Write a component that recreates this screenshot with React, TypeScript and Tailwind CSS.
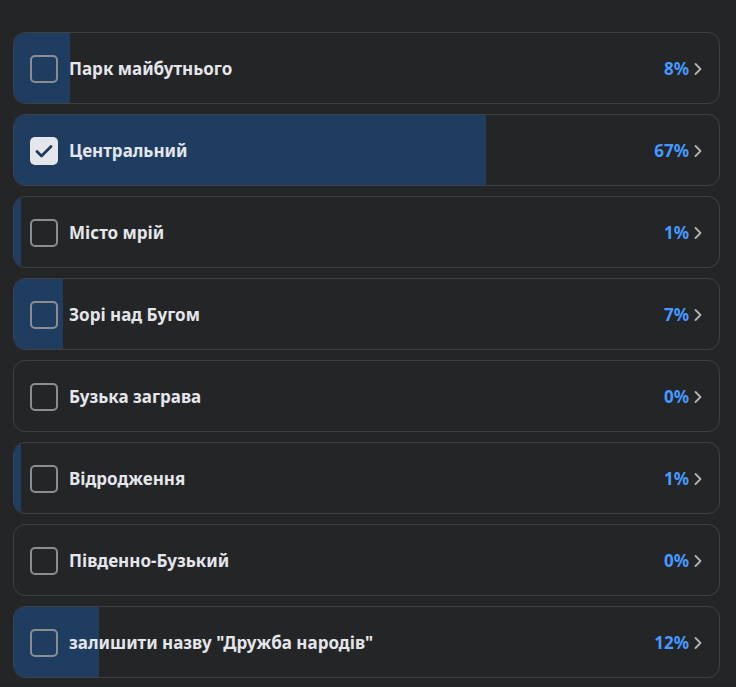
import React from "react";

const items = [
  { label: "Парк майбутнього", pct: 8, checked: false },
  { label: "Центральний", pct: 67, checked: true },
  { label: "Місто мрій", pct: 1, checked: false },
  { label: "Зорі над Бугом", pct: 7, checked: false },
  { label: "Бузька заграва", pct: 0, checked: false },
  { label: "Відродження", pct: 1, checked: false },
  { label: "Південно-Бузький", pct: 0, checked: false },
  { label: 'залишити назву "Дружба народів"', pct: 12, checked: false },
];

export default function App() {
  return (
    <div
      className="w-[736px] h-[687px] bg-[#242526] overflow-hidden pt-[32px] pl-[13px] pr-[16px]"
      style={{ fontFamily: '"Noto Sans", "Open Sans", sans-serif' }}
    >
      <div className="flex flex-col gap-[10px]">
        {items.map((it) => (
          <div
            key={it.label}
            className="relative h-[72px] rounded-[12px] border border-[#3e4042] overflow-hidden flex items-center"
          >
            <div
              className="absolute left-0 top-0 bottom-0 bg-[#1f3d61]"
              style={{ width: `${it.pct}%` }}
            />
            <div className="relative flex items-center w-full pl-[16px] pr-[16px] pt-[1px]">
              {it.checked ? (
                <svg width="28" height="28" viewBox="0 0 28 28">
                  <rect x="0" y="0" width="28" height="28" rx="5" fill="#e4e6eb" />
                  <path d="M7 14.5 L11.5 19 L21 9.5" stroke="#1f3d61" strokeWidth="2.8" fill="none" strokeLinecap="round" strokeLinejoin="round" />
                </svg>
              ) : (
                <div className="w-[28px] h-[28px] rounded-[5px] border-2 border-[#8a8d91]" />
              )}
              <span className="ml-[11px] text-[17px] font-bold text-[#e4e6eb]">{it.label}</span>
              <span className="ml-auto text-[17px] font-bold text-[#4599ff]">{it.pct}%</span>
              <svg className="ml-[4px]" width="10" height="16" viewBox="0 0 10 16">
                <path d="M2.5 3 L7.5 8 L2.5 13" stroke="#b0b3b8" strokeWidth="1.8" fill="none" strokeLinecap="round" strokeLinejoin="round" />
              </svg>
            </div>
          </div>
        ))}
      </div>
    </div>
  );
}
